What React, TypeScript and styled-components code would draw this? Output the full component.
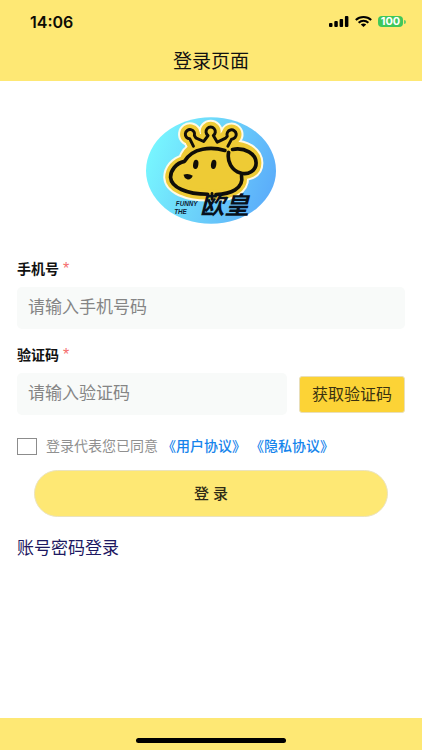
import React from "react";
import styled, { createGlobalStyle } from "styled-components";

const Global = createGlobalStyle`
  *, *::before, *::after { box-sizing: border-box; }
  body {
    margin: 0;
    background: #ffffff;
    color: #111111;
    font-family: "Liberation Sans", "Noto Sans CJK SC", sans-serif;
  }
  button, input { font-family: inherit; }
`;

const Page = styled.div`
  min-height: 100vh;
  display: flex;
  flex-direction: column;
`;

const Header = styled.header`
  background: #fee874;
`;

const StatusBar = styled.div`
  display: flex;
  align-items: center;
  justify-content: space-between;
  height: 43px;
  padding: 0 16px 0 30px;
`;

const Clock = styled.time`
  font-family: Inter, sans-serif;
  font-size: 16px;
  font-weight: 600;
  line-height: 20px;
  color: #0c0b04;
`;

const StatusIcons = styled.div`
  display: flex;
  align-items: center;
  gap: 6px;
`;

const Battery = styled.span`
  display: flex;
  align-items: center;
  gap: 1px;

  &::after {
    content: "";
    width: 2px;
    height: 4px;
    border-radius: 0 2px 2px 0;
    background: #5fce6c;
  }
`;

const BatteryLevel = styled.span`
  width: 25px;
  height: 11px;
  border-radius: 4px;
  background: #3fc75a;
  color: #ffffff;
  font-family: Inter, sans-serif;
  font-size: 11px;
  font-weight: 700;
  line-height: 11px;
  text-align: center;
`;

const Title = styled.h1`
  margin: 0;
  font-size: 19px;
  font-weight: 400;
  line-height: 38px;
  text-align: center;
`;

const Form = styled.form`
  flex: 1;
  display: flex;
  flex-direction: column;
  padding: 36px 17px 24px;
`;

const LogoWrap = styled.div`
  display: flex;
  justify-content: center;
  margin-bottom: 35px;
`;

const Field = styled.div`
  display: flex;
  flex-direction: column;
  gap: 8px;
  margin-bottom: 16px;
`;

const Label = styled.label`
  font-size: 14px;
  font-weight: 700;
  line-height: 20px;
`;

const Required = styled.span`
  margin-left: 4px;
  color: #f56c6c;
  font-size: 16px;
  font-weight: 400;
  line-height: 16px;
`;

const FieldRow = styled.div`
  display: flex;
  align-items: center;
  gap: 12px;
`;

const TextBox = styled.input`
  flex: 1;
  min-width: 0;
  height: 42px;
  padding: 0 11px;
  border: 0;
  border-radius: 5px;
  background: #f8faf9;
  color: #111111;
  font-size: 17px;

  &::placeholder { color: #858585; opacity: 1; }
`;

const CodeButton = styled.button`
  height: 37px;
  padding: 0 12px 3px;
  border: 1px solid #e9dfba;
  border-radius: 3px;
  background: #fcd336;
  color: #3a3210;
  font-size: 16px;
`;

const Agreement = styled.div`
  display: flex;
  align-items: center;
  gap: 4px;
  margin-top: 5px;
  color: #909090;
  font-size: 14px;
  line-height: 20px;
`;

const Consent = styled.label`
  display: flex;
  align-items: center;
  gap: 9px;
  white-space: nowrap;
`;

const Checkbox = styled.input`
  appearance: none;
  width: 20px;
  height: 17px;
  margin: 0;
  border: 1px solid #8c8c8c;
  background: #ffffff;

  &:checked { background: #fcd336; }
`;

const PolicyLink = styled.a`
  color: #1584ec;
  font-weight: 500;
  text-decoration: none;
  white-space: nowrap;
`;

const LoginButton = styled.button`
  height: 47px;
  margin: 14px 17px 20px;
  padding: 0 0 3px;
  border: 1px solid #ebe3bd;
  border-radius: 24px;
  background: #fee874;
  color: #2f2b16;
  font-size: 15px;
  font-weight: 500;
`;

const AccountLink = styled.a`
  align-self: flex-start;
  color: #1d1862;
  font-size: 17px;
  line-height: 24px;
  text-decoration: none;
`;

const Footer = styled.footer`
  display: flex;
  justify-content: center;
  padding: 20px 0 7px;
  background: #fee874;
`;

const HomeIndicator = styled.div`
  width: 150px;
  height: 5px;
  border-radius: 3px;
  background: #000000;
`;

const crown =
  "M161 107 L150 85 A14 14 0 1 1 164 75 L168 82 L192 93 L205 75 A14 14 0 1 1 221 75 L233 95 L258 83 L263 77 A14 14 0 1 1 276 86 L265 107";
const head =
  "M256 120 C215 108 158 111 134 153 C108 158 92 181 92 201 C94 231 140 252 204 252";
const chin = "M229 253 C272 251 314 236 306 196";
const ear =
  "M279 117 C316 110 350 130 350 158 C350 181 326 195 303 188 C276 180 262 153 267 126";
const silhouette =
  "M161 107 L150 85 L150 60 L168 82 L192 93 L212 60 L233 95 L277 62 L265 110 C320 105 350 130 350 158 C350 185 330 190 306 192 C314 236 272 251 229 253 L204 252 C140 252 94 231 92 201 C92 181 108 158 134 153 C140 135 150 122 161 118 Z";

const Logo = () => (
  <svg width="130" height="107" viewBox="18 20 392 321" role="img" aria-label="FUNNY THE 欧皇">
    <defs>
      <linearGradient id="sky" x1="0" y1="0.3" x2="1" y2="0.6">
        <stop offset="0" stopColor="#78f8ff" />
        <stop offset="0.5" stopColor="#6cd2fa" />
        <stop offset="1" stopColor="#5badfa" />
      </linearGradient>
    </defs>
    <ellipse cx="214" cy="180.500" rx="196" ry="160.500" fill="url(#sky)" />
    <g strokeLinejoin="round" strokeLinecap="round">
      <g fill="none" stroke="#fffbe6" strokeWidth="44">
        <path d={crown} />
        <path d={silhouette} fill="#fffbe6" />
      </g>
      <g fill="none" stroke="#eecb35" strokeWidth="32">
        <path d={crown} />
        <path d={silhouette} fill="#eecb35" />
      </g>
      <g fill="none" stroke="#100e08" strokeWidth="11">
        <path d={crown} strokeWidth="9" />
        <path d={head} />
        <path d={chin} />
        <path d={ear} />
        <path d="M217 249 V268" strokeWidth="8" />
      </g>
    </g>
    <ellipse cx="168" cy="162" rx="8" ry="14" fill="#100e08" transform="rotate(8 168 162)" />
    <ellipse cx="222" cy="162" rx="8" ry="14" fill="#100e08" transform="rotate(8 222 162)" />
    <path d="M131 193 Q146 188 159 196 Q153 210 142 207 Q133 203 131 193 Z" fill="#100e08" />
    <g
      fill="#0e2034"
      fontFamily="Liberation Sans, sans-serif"
      fontWeight="700"
      fontStyle="italic"
      fontSize="19"
    >
      <text x="108" y="289">FUNNY</text>
      <text x="103" y="311">THE</text>
    </g>
    <text
      x="181"
      y="312"
      fill="#07111d"
      fontFamily="Noto Sans CJK SC, sans-serif"
      fontWeight="700"
      fontStyle="italic"
      fontSize="74"
    >
      欧皇
    </text>
  </svg>
);

const Signal = () => (
  <svg width="20" height="11" viewBox="0 0 20 11" aria-hidden="true">
    <rect x="0" y="7" width="3.500" height="4" rx="1" />
    <rect x="5.300" y="5" width="3.500" height="6" rx="1" />
    <rect x="10.600" y="3" width="3.500" height="8" rx="1" />
    <rect x="15.900" y="0" width="3.500" height="11" rx="1" />
  </svg>
);

const Wifi = () => (
  <svg width="17" height="11" viewBox="0 0 17 11" aria-hidden="true">
    <g fill="none" stroke="#000000" strokeWidth="2">
      <path d="M0.800 4 C5 0 12 0 16.200 4" />
      <path d="M3.600 6.700 C6.500 4.200 10.500 4.200 13.400 6.700" />
    </g>
    <path d="M5.800 8.600 Q8.500 6.500 11.200 8.600 L8.500 11 Z" />
  </svg>
);

export default function App() {
  return (
    <Page>
      <Global />
      <Header>
        <StatusBar>
          <Clock>14:06</Clock>
          <StatusIcons>
            <Signal />
            <Wifi />
            <Battery>
              <BatteryLevel>100</BatteryLevel>
            </Battery>
          </StatusIcons>
        </StatusBar>
        <Title>登录页面</Title>
      </Header>

      <Form onSubmit={(event) => event.preventDefault()}>
        <LogoWrap>
          <Logo />
        </LogoWrap>

        <Field>
          <Label htmlFor="phone">
            手机号<Required>*</Required>
          </Label>
          <FieldRow>
            <TextBox id="phone" type="tel" placeholder="请输入手机号码" />
          </FieldRow>
        </Field>

        <Field>
          <Label htmlFor="code">
            验证码<Required>*</Required>
          </Label>
          <FieldRow>
            <TextBox id="code" type="text" inputMode="numeric" placeholder="请输入验证码" />
            <CodeButton type="button">获取验证码</CodeButton>
          </FieldRow>
        </Field>

        <Agreement>
          <Consent>
            <Checkbox type="checkbox" />
            登录代表您已同意
          </Consent>
          <PolicyLink href="#terms">《用户协议》</PolicyLink>
          <PolicyLink href="#privacy">《隐私协议》</PolicyLink>
        </Agreement>

        <LoginButton type="submit">登 录</LoginButton>
        <AccountLink href="#account">账号密码登录</AccountLink>
      </Form>

      <Footer>
        <HomeIndicator />
      </Footer>
    </Page>
  );
}
